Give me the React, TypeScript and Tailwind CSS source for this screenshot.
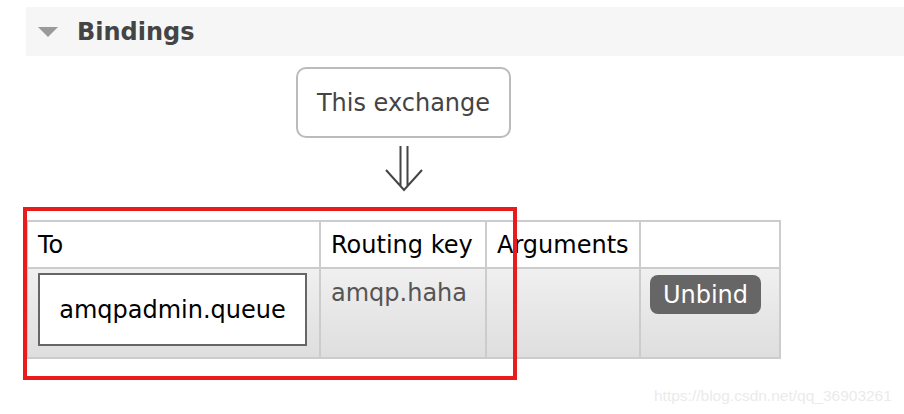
export default function App() {
  return (
    <div
      className="relative h-[414px] w-[904px] overflow-hidden bg-white pt-[7px]"
      style={{ fontFamily: '"DejaVu Sans", Verdana, sans-serif' }}
    >
      {/* section header */}
      <div className="ml-[26px] flex h-[49px] items-center bg-[#f6f6f6] pl-[12px]">
        <svg width="20" height="10" viewBox="0 0 20 10" aria-hidden>
          <path d="M0 0h20L10 10Z" fill="#9a9a9a" />
        </svg>
        <span className="ml-[19px] text-[24px] font-bold text-[#444]">Bindings</span>
      </div>

      {/* exchange box + arrow */}
      <div className="ml-[296px] mt-[11px] flex h-[71px] w-[215px] items-center justify-center rounded-[10px] border-2 border-[#bbb] text-[24px] text-[#444]">
        This exchange
      </div>
      <svg
        className="ml-[384px] mt-[8px] block"
        width="40"
        height="46"
        viewBox="0 0 40 46"
        fill="none"
        stroke="#444"
        strokeWidth="2"
        aria-hidden
      >
        <path d="M16.5 0v40M23.5 0v40M2 24l18 20 18-20" />
      </svg>

      {/* bindings table */}
      <table className="ml-[26px] mt-[28px] w-[755px] border-collapse text-[24px] text-black">
        <thead>
          <tr className="h-[47px] bg-white">
            <th className="w-[293px] border-2 border-[#ccc] px-[10px] text-left font-normal">To</th>
            <th className="w-[166px] border-2 border-[#ccc] px-[10px] text-left font-normal">Routing key</th>
            <th className="w-[154px] border-2 border-[#ccc] px-[10px] text-left font-normal">Arguments</th>
            <th className="border-2 border-[#ccc]"></th>
          </tr>
        </thead>
        <tbody>
          <tr className="h-[90px] bg-gradient-to-b from-[#f0f0f0] to-[#dedede] align-top">
            <td className="border-2 border-[#ccc] px-[10px] pt-[4px]">
              <div className="flex h-[73px] w-[269px] items-center justify-center border-2 border-[#666] bg-white">
                amqpadmin.queue
              </div>
            </td>
            <td className="border-2 border-[#ccc] px-[10px] pt-[6px] text-[#555]">amqp.haha</td>
            <td className="border-2 border-[#ccc]"></td>
            <td className="border-2 border-[#ccc] pl-[9px] pt-[6px]">
              <span className="inline-flex h-[39px] w-[111px] items-center justify-center rounded-[8px] bg-[#666] text-white">
                Unbind
              </span>
            </td>
          </tr>
        </tbody>
      </table>

      {/* annotation */}
      <div className="absolute left-[23px] top-[207px] h-[173px] w-[494px] border-[4px] border-[#e81c1c]" />

      <div
        className="absolute left-[654px] top-[384px] text-[15.5px] text-[#ebebeb]"
        style={{ fontFamily: '"Liberation Sans", Arial, sans-serif' }}
      >
        https://blog.csdn.net/qq_36903261
      </div>
    </div>
  );
}
